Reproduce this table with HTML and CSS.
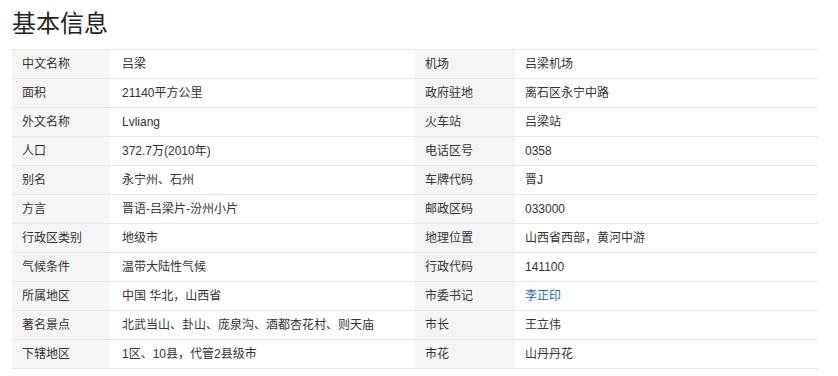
FILE: index.html
```html
<!DOCTYPE html>
<html lang="zh">
<head>
<meta charset="utf-8">
<link rel="stylesheet" href="styles.css">
</head>
<body>
<h2 class="title">基本信息</h2>
<table class="info">
<colgroup><col class="c-l1"><col class="c-v1"><col class="c-l2"><col class="c-v2"></colgroup>
<tr><th>中文名称</th><td>吕梁</td><th>机场</th><td class="v2">吕梁机场</td></tr>
<tr><th>面积</th><td>21140平方公里</td><th>政府驻地</th><td class="v2">离石区永宁中路</td></tr>
<tr><th>外文名称</th><td>Lvliang</td><th>火车站</th><td class="v2">吕梁站</td></tr>
<tr><th>人口</th><td>372.7万(2010年)</td><th>电话区号</th><td class="v2">0358</td></tr>
<tr><th>别名</th><td>永宁州、石州</td><th>车牌代码</th><td class="v2">晋J</td></tr>
<tr><th>方言</th><td>晋语-吕梁片-汾州小片</td><th>邮政区码</th><td class="v2">033000</td></tr>
<tr><th>行政区类别</th><td>地级市</td><th>地理位置</th><td class="v2">山西省西部，黄河中游</td></tr>
<tr><th>气候条件</th><td>温带大陆性气候</td><th>行政代码</th><td class="v2">141100</td></tr>
<tr><th>所属地区</th><td>中国 华北，山西省</td><th>市委书记</th><td class="v2"><a class="link" href="#">李正印</a></td></tr>
<tr><th>著名景点</th><td>北武当山、卦山、庞泉沟、酒都杏花村、则天庙</td><th>市长</th><td class="v2">王立伟</td></tr>
<tr><th>下辖地区</th><td>1区、10县，代管2县级市</td><th>市花</th><td class="v2">山丹丹花</td></tr>
</table>
</body>
</html>
```
FILE: styles.css
```css
html, body { margin: 0; padding: 0; background: #fff; }
body {
  font-family: "Liberation Sans", "Noto Sans CJK SC", sans-serif;
  color: #333;
  padding: 0 20px 0 12px;
}
.title {
  margin: 0;
  padding-top: 6px;
  height: 49px;
  box-sizing: border-box;
  font-size: 24px;
  font-weight: normal;
  line-height: 32px;
  color: #222;
  font-family: "Noto Sans CJK SC", sans-serif;
}
.info {
  width: 806px;
  border-collapse: collapse;
  table-layout: fixed;
  font-size: 12px;
  line-height: 16px;
}
.c-l1 { width: 98px; }
.c-v1 { width: 305px; }
.c-l2 { width: 100px; }
.c-v2 { width: 303px; }
.info th, .info td {
  height: 28px;
  padding: 0 10px;
  text-align: left;
  font-weight: normal;
  border-top: 1px solid #e6e6e6;
  border-bottom: 1px solid #e6e6e6;
  white-space: nowrap;
  color: #333;
  vertical-align: middle;
}
.info th { background: #f5f5f5; }
.info td { padding-left: 12px; }
.info td.v2 { padding-left: 10px; }
.link { color: #136ec2; text-decoration: none; }
```
